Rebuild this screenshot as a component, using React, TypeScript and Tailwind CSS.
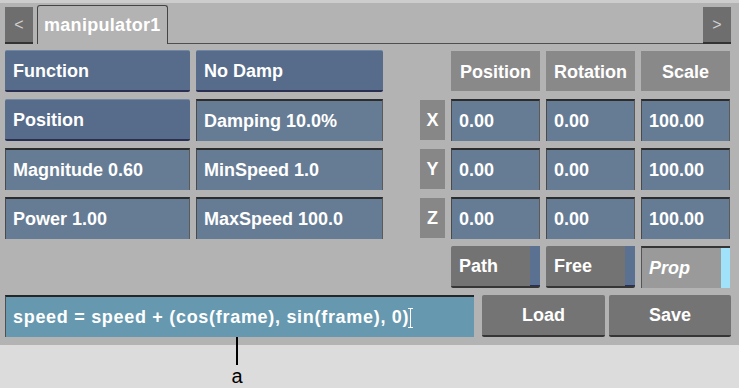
import React from "react";

const selected =
  "h-[42px] rounded-[2px] bg-[#566c8a] border-t border-[#7086a2] border-b-2 border-b-[#2a2f52] flex items-center pl-[8px] pt-[2px] text-white";
const field =
  "h-[42px] bg-[#667c94] border-t-2 border-t-[#2c2c2c] border-l border-l-[#4a4a4a] border-r border-r-[#5a5a5a] flex items-center pl-[7px] pt-[1px] text-white";
const header = "h-[40px] mt-[1px] pt-[2px] bg-[#898989] flex items-center justify-center text-white";
const axis = "h-[40px] w-[25px] justify-self-end self-center pt-[1px] bg-[#878787] flex items-center justify-center text-white";

function Field({ children }: { children: React.ReactNode }) {
  return <div className={field}>{children}</div>;
}

function Toggle({ label }: { label: string }) {
  return (
    <div className="h-[42px] flex rounded-[2px] bg-[#737373] border-b-2 border-b-[#363636]">
      <div className="flex-1 flex items-center pl-[8px] pt-[1px] text-white">{label}</div>
      <div className="w-[10px] bg-[#5a7192] border-b border-b-[#283060]" />
    </div>
  );
}

export default function App() {
  return (
    <div className="w-[739px] h-[388px] bg-[#dcdcdc] overflow-hidden font-['Liberation_Sans',Arial,sans-serif] font-bold text-[18px]">
      <div className="h-[345px] bg-[#b3b3b3] border-t-[3px] border-t-[#cdcdcd] px-[5px]">
        {/* tab row */}
        <div className="h-[41px] flex items-end">
          <div className="w-[28px] h-[37px] bg-[#6e6e6e] border-b-2 border-b-[#333] flex items-center justify-center text-[#d0d0d0] font-normal text-[16px]">
            &lt;
          </div>
          <div className="w-[4px]" />
          <div className="w-[131px] h-[39px] border border-b-0 border-[#444] rounded-t-[3px] flex items-center pl-[6px] pt-[1px] text-white tracking-[0.3px]">
            manipulator1
          </div>
          <div className="flex-1 h-full border-b border-b-[#4f4f4f]" />
          <div className="w-[28px] h-[37px] bg-[#6e6e6e] border-b-2 border-b-[#333] flex items-center justify-center text-[#d0d0d0] font-normal text-[16px]">
            &gt;
          </div>
          <div className="w-[3px]" />
        </div>

        {/* controls */}
        <div className="mt-[6px] grid grid-cols-[185px_187px_56px_89px_89px_89px] gap-x-[6px] gap-y-[7px]">
          <div className={selected}>Function</div>
          <div className={selected}>No Damp</div>
          <div />
          <div className={header}>Position</div>
          <div className={header}>Rotation</div>
          <div className={header}>Scale</div>

          <div className={selected}>Position</div>
          <Field>Damping 10.0%</Field>
          <div className={axis}>X</div>
          <Field>0.00</Field>
          <Field>0.00</Field>
          <Field>100.00</Field>

          <Field>Magnitude 0.60</Field>
          <Field>MinSpeed 1.0</Field>
          <div className={axis}>Y</div>
          <Field>0.00</Field>
          <Field>0.00</Field>
          <Field>100.00</Field>

          <Field>Power 1.00</Field>
          <Field>MaxSpeed 100.0</Field>
          <div className={axis}>Z</div>
          <Field>0.00</Field>
          <Field>0.00</Field>
          <Field>100.00</Field>

          <div />
          <div />
          <div />
          <Toggle label="Path" />
          <Toggle label="Free" />
          <div className="h-[42px] flex bg-[#9a9a9a] border-t-2 border-t-[#353535] border-l border-l-[#555]">
            <div className="flex-1 flex items-center pl-[7px] pt-[1px] text-white italic">Prop</div>
            <div className="w-[9px] bg-[#a0e2f9]" />
          </div>
        </div>

        <div className="mt-[7px] flex">
          <div className="w-[469px] h-[42px] bg-[#6698af] border-t-2 border-t-[#262626] border-l border-l-[#4f4f4f] flex items-center pl-[7px] pt-[1px] text-white tracking-[0.7px]">
            speed = speed + (cos(frame), sin(frame), 0)
            <span className="inline-block w-[1px] h-[20px] bg-white ml-[1px] relative">
              <span className="absolute -left-[2px] top-0 w-[5px] h-[1px] bg-white" />
              <span className="absolute -left-[2px] bottom-0 w-[5px] h-[1px] bg-white" />
            </span>
          </div>
          <div className="w-[8px]" />
          <div className="w-[123px] h-[42px] rounded-[2px] bg-[#747474] border-b-2 border-b-[#363636] flex items-center justify-center pt-[1px] text-white">
            Load
          </div>
          <div className="w-[4px]" />
          <div className="w-[122px] h-[42px] rounded-[2px] bg-[#747474] border-b-2 border-b-[#363636] flex items-center justify-center pt-[1px] text-white">
            Save
          </div>
        </div>
      </div>

      {/* callout */}
      <div className="w-[474px] flex flex-col items-center -mt-[8px]">
        <div className="w-[2px] h-[28px] bg-black" />
        <div className="font-normal text-[20px] leading-[22px] text-black">a</div>
      </div>
    </div>
  );
}
